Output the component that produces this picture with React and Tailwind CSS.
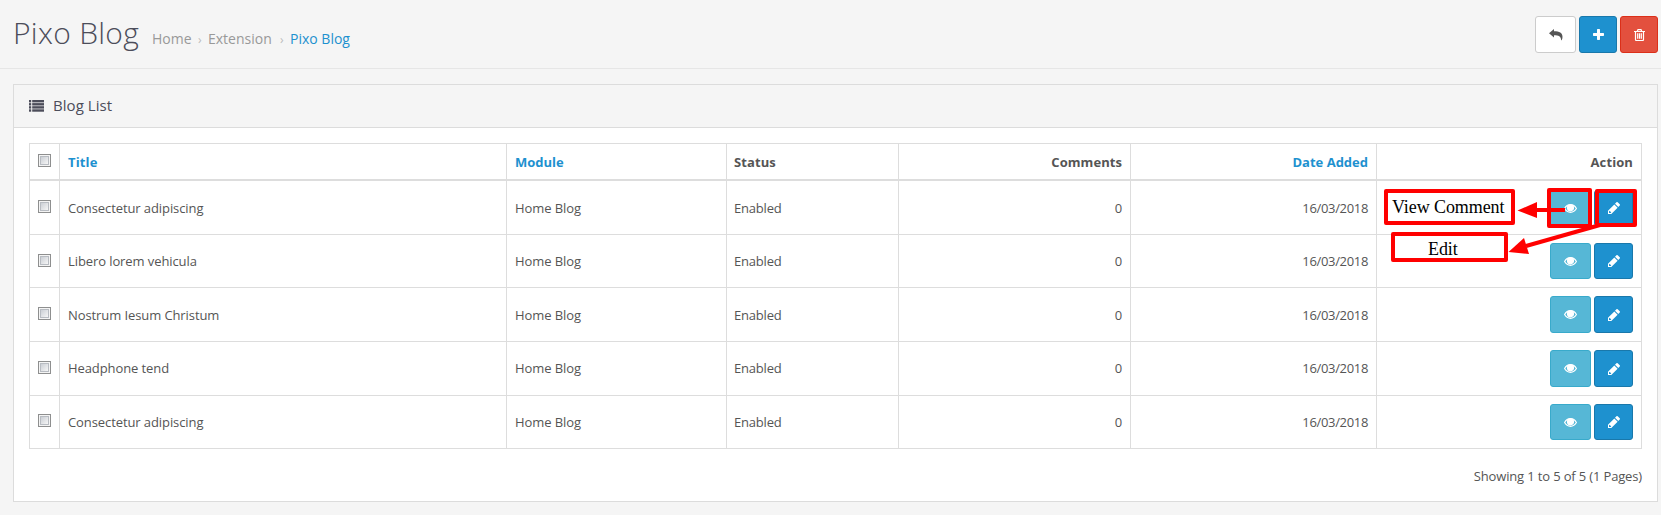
const ListIcon = () => (
  <svg width="15" height="12" viewBox="0 0 15 12" fill="currentColor">
    {[0, 3.1, 6.2, 9.3].map((y) => (
      <g key={y}>
        <rect x="0" y={y} width="2.200" height="2.400" />
        <rect x="3.200" y={y} width="11.800" height="2.400" />
      </g>
    ))}
  </svg>
);

const ReplyIcon = () => (
  <svg width="14" height="12" viewBox="0 0 14 12" fill="currentColor">
    <path d="M0 4.200 5 0v2.300c5.400 0 8.500 1.600 8.500 5.600 0 1.200-.3 2.400-.9 3.300-.3.300-.6.200-.5-.2C12 7.500 9.800 6.300 5 6.300v2.200z" />
  </svg>
);

const PlusIcon = () => (
  <svg width="11" height="11" viewBox="0 0 11 11" fill="currentColor">
    <path d="M4.700 0h1.600q.7 0 .7.700v3.300h3.300q.7 0 .7.700v1.600q0 .7-.7.700H7v3.300q0 .7-.7.700H4.700q-.7 0-.7-.7V7H.7Q0 7 0 6.300V4.700Q0 4 .7 4H4V.7q0-.7.700-.7z" />
  </svg>
);

const TrashIcon = () => (
  <svg width="11" height="12" viewBox="0 0 11 12" fill="none" stroke="currentColor" strokeWidth="1.200">
    <path d="M0 2.500h11M3.300 2.300 4 .6h3l.7 1.700M1.500 2.500v8q0 1 .9 1h6.200q.9 0 .9-1v-8M3.700 4.300v5.400M5.500 4.300v5.400M7.300 4.300v5.400" />
  </svg>
);

const EyeIcon = () => (
  <svg width="13" height="9" viewBox="0 0 13 9" fill="none" stroke="currentColor" strokeWidth="1.200">
    <path d="M.6 4.500C2 2 4.100.7 6.500.7S11 2 12.400 4.500C11 7 8.900 8.300 6.500 8.300S2 7 .6 4.500z" />
    <circle cx="6.500" cy="3.800" r="3" fill="currentColor" />
  </svg>
);

const PencilIcon = () => (
  <svg width="12" height="12" viewBox="0 0 12 12" fill="currentColor">
    <path d="M0 12V8.700L6.300 2.400l3.300 3.300L3.300 12zM1 9.500v1.600h1.700l.6-.6-1.700-1.700zM7 1.700 8.400.3q.7-.6 1.300 0l2 2q.6.600 0 1.300L10.300 5z" fillRule="evenodd" />
  </svg>
);

const Checkbox = () => (
  <span className="block size-[13px] border border-[#8e8f8f] bg-[#f4f4f4] p-px">
    <span className="block size-full border border-[#b8bcc2] bg-linear-to-br from-[#cbcfd5] to-[#f6f6f6]" />
  </span>
);

const rows = [
  { title: "Consectetur adipiscing", size: "h-[54px] leading-[54px]", check: "pt-[19px]", action: "pt-[9px]", button: "h-9" },
  { title: "Libero lorem vehicula", size: "h-[53px] leading-[52px]", check: "pt-[19px]", action: "pt-2", button: "h-9" },
  { title: "Nostrum Iesum Christum", size: "h-[54px] leading-[54px]", check: "pt-[19px]", action: "pt-2", button: "h-[37px]" },
  { title: "Headphone tend", size: "h-[54px] leading-[53px]", check: "pt-[19px]", action: "pt-2", button: "h-[37px]" },
  { title: "Consectetur adipiscing", size: "h-[53px] leading-[52px]", check: "pt-[18px]", action: "pt-2", button: "h-9" },
];

const COLS = "grid grid-cols-[30px_447px_220px_172px_232px_246px_265px] border-l border-[#dddddd]";
const CELL = "border-r border-[#dddddd] px-2";
const STATUS = "border-r border-[#dddddd] px-[7px]";

export default function App() {
  return (
    <div className="relative h-[515px] w-[1661px] overflow-hidden bg-[#f5f5f5] font-['Open_Sans',sans-serif] text-[13px] leading-[18px] text-[#555555]">
      <header className="flex h-[69px] justify-between border-b border-[#e6e6e6] pl-[13px] pr-[3px] pt-4">
        <div className="flex">
          <h1 className="w-[139px] whitespace-nowrap text-[30px] font-light leading-[34px] tracking-[0.300px] text-[#4c4d5a]">Pixo Blog</h1>
          <nav className="flex pt-[14px] text-[14px] text-[#999999]">
            <span className="w-[46px]">Home</span>
            <span className="w-[10px] pt-px text-[12px] text-[#bbbbbb]">›</span>
            <span className="w-[72px]">Extension</span>
            <span className="w-[10px] pt-px text-[12px] text-[#bbbbbb]">›</span>
            <span className="text-[#1e91cf]">Pixo Blog</span>
          </nav>
        </div>
        <div className="flex gap-[3px]">
          <button className="flex h-[37px] w-[41px] items-center justify-center rounded-[3px] border border-[#cccccc] bg-white text-[#555555]"><ReplyIcon /></button>
          <button className="flex h-[37px] w-[38px] items-center justify-center rounded-[3px] border border-[#1978ab] bg-[#1e91cf] text-white"><PlusIcon /></button>
          <button className="flex h-[37px] w-[38px] items-center justify-center rounded-[3px] border border-[#dc2f19] bg-[#e3503e] text-white"><TrashIcon /></button>
        </div>
      </header>

      <main className="ml-[13px] mt-[15px] h-[418px] w-[1645px] border border-[#dcdcdc] bg-white">
        <div className="flex h-[43px] items-center gap-[9px] border-b border-[#dcdcdc] bg-[#f5f5f5] pb-px pl-[15px] text-[15px] text-[#4c4d5a]">
          <ListIcon />
          <h2 className="pb-[2px] tracking-[0.050px]">Blog List</h2>
        </div>

        <div className="ml-[15px] mt-[15px] w-[1613px] border-t border-[#dddddd]">
          <div className={`${COLS} h-[37px] border-b-2 font-bold leading-[36px]`}>
            <div className={`${CELL} pt-[10px]`}><Checkbox /></div>
            <div className={`${CELL} tracking-[0.150px] text-[#1e91cf]`}>Title</div>
            <div className={`${CELL} text-[#1e91cf]`}>Module</div>
            <div className={`${STATUS} tracking-[0.100px]`}>Status</div>
            <div className={`${CELL} text-right tracking-[0.060px]`}>Comments</div>
            <div className={`${CELL} text-right text-[#1e91cf]`}>Date Added</div>
            <div className={`${CELL} text-right tracking-[0.100px]`}>Action</div>
          </div>
          {rows.map((row, i) => (
            <div key={i} className={`${COLS} ${row.size} border-b tracking-[-0.090px]`}>
              <div className={`${CELL} ${row.check}`}><Checkbox /></div>
              <div className={CELL}>{row.title}</div>
              <div className={CELL}>Home Blog</div>
              <div className={`${STATUS} tracking-[-0.200px]`}>Enabled</div>
              <div className={`${CELL} text-right`}>0</div>
              <div className={`${CELL} text-right tracking-[-0.330px]`}>16/03/2018</div>
              <div className={`${CELL} ${row.action} flex justify-end gap-[3px]`}>
                <button className={`${row.button} flex w-[41px] items-center justify-center rounded-[3px] border border-[#39aacb] bg-[#56b7d6] text-white`}><EyeIcon /></button>
                <button className={`${row.button} flex w-[39px] items-center justify-center rounded-[3px] border border-[#1978ab] bg-[#1e91cf] text-white`}><PencilIcon /></button>
              </div>
            </div>
          ))}
        </div>
        <p className="mt-[18px] pr-[15px] text-right tracking-[-0.150px]">Showing 1 to 5 of 5 (1 Pages)</p>
      </main>

      <div className="absolute left-[1384px] top-[189px] h-[36px] w-[131px] whitespace-nowrap rounded-[2px] border-4 border-[#ff0000] bg-white pl-1 font-['Liberation_Serif',serif] text-[18px] leading-[28px] tracking-[-0.080px] text-black">View Comment</div>
      <div className="absolute left-[1391px] top-[232px] h-[30px] w-[117px] rounded-[2px] border-4 border-[#ff0000] bg-white pl-[33px] font-['Liberation_Serif',serif] text-[18px] leading-[27px] tracking-[-0.100px] text-black">Edit</div>
      <div className="absolute left-[1547px] top-[188px] h-[40px] w-[45px] rounded-[2px] border-4 border-[#ff0000]" />
      <div className="absolute left-[1595px] top-[189px] h-[38px] w-[42px] rounded-[2px] border-4 border-[#ff0000]" />
      <svg className="absolute left-[1500px] top-[190px]" width="110" height="70" viewBox="1500 190 110 70" fill="#ff0000" stroke="#ff0000">
        <path d="M1535 210H1565" strokeWidth="4" />
        <path d="M1517.500 210.500 1537 202v16z" stroke="none" />
        <path d="M1600 225 1526 246" strokeWidth="4" />
        <path d="M1508.500 252 1524 238l5 16z" stroke="none" />
      </svg>
    </div>
  );
}
